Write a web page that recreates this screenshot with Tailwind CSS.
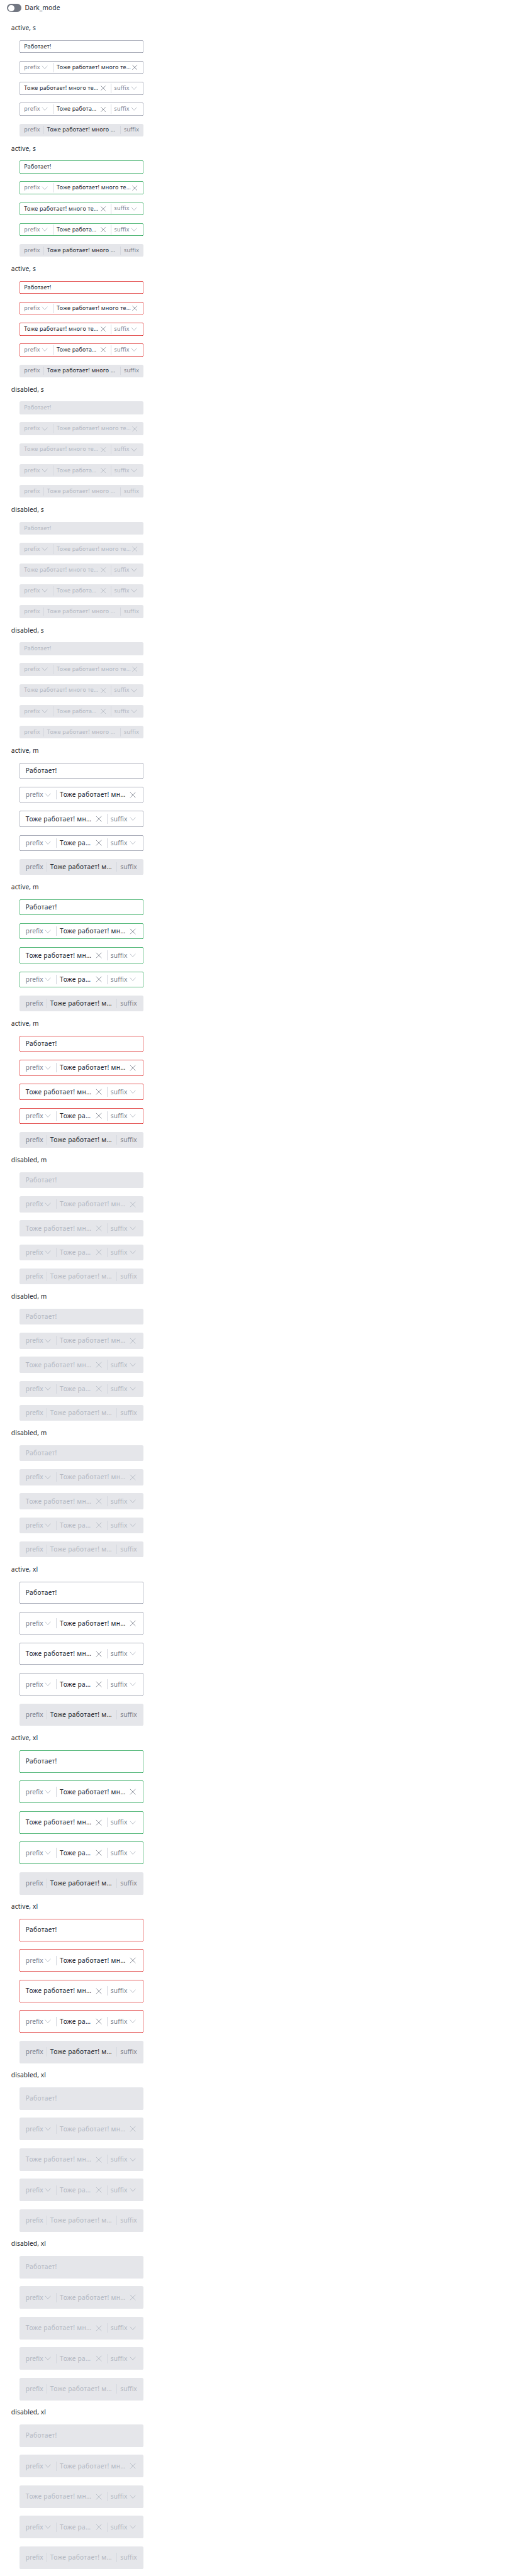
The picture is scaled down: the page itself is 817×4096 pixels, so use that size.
<!DOCTYPE html>
<html lang="ru" class="text-[10.2125px]">
<head>
<meta charset="utf-8">
<title>Input prefix and suffix</title>
<script src="https://cdn.jsdelivr.net/npm/@tailwindcss/browser@4"></script>
</head>
<body class="bg-white font-['Noto_Sans',sans-serif] text-[1rem] leading-5 tracking-[0.01em] text-[#22262f]">
<header class="flex h-15 items-start pt-2.5 pl-4.5">
  <div class="flex items-center gap-2">
    <span class="flex h-5 w-9 items-center rounded-full bg-[#727782] p-0.5"><span class="size-4 rounded-full bg-white"></span></span>
    <span>Dark_mode</span>
  </div>
</header>
<main id="list" class="flex flex-col"></main>
<script>
const sizes = {
  s: {
    field: 'h-8 pl-3 text-[0.875rem]', pre: 'w-18.25 h-6', suf: 'w-20.75 h-6 pr-4', preRO: 'w-12.25 h-5', sufRO: 'w-14.75 h-5',
    xEnd: 'mr-3.5', xMid: 'mr-2.5', x: 'M2.2 2.2 13.8 13.8M13.8 2.2 2.2 13.8', side: 'tracking-[0.022em]', main: 'tracking-[0.026em]',
    t: ['Тоже работает! много те…', 'Тоже работает! много те…', 'Тоже работа…', 'Тоже работает! много …']
  },
  m: {
    field: 'h-10 pl-4', pre: 'w-19.25 h-6', suf: 'w-23 h-6 pr-5', preRO: 'w-13.25 h-6', sufRO: 'w-17 h-6',
    xEnd: 'mr-5', xMid: 'mr-3', x: 'M1.3 1.3 14.7 14.7M14.7 1.3 1.3 14.7', side: 'tracking-[0.006em]', main: 'tracking-[0.03em]',
    t: ['Тоже работает! мн…', 'Тоже работает! мн…', 'Тоже ра…', 'Тоже работает! м…']
  }
};
sizes.xl = { ...sizes.m, field: 'h-14 pl-4' };

const line = ' border-[#d5d8df] ';
const icon = (d, cls) => `<svg viewBox="0 0 16 16" class="size-4 shrink-0 overflow-visible ${cls}" fill="none" stroke="currentColor" stroke-width="1.4"><path d="${d}"/></svg>`;
const chevron = cls => icon('M1.3 4.2 8 11.6 14.7 4.2', cls);

function section(state, size, ring) {
  const z = sizes[size], off = state === 'disabled';
  const muted = (off ? 'text-[#b3b8c2] ' : 'text-[#7c818d] ') + z.side;
  const chev = 'text-[#b3b8c2]';
  const skin = off ? 'bg-[#e5e6ea] text-[#b3b8c2]' : 'bg-white inset-ring-[0.0625rem] ' + ring;
  const base = 'flex w-77.5 items-center rounded-[0.25rem] whitespace-nowrap ';
  const text = t => `<span class="min-w-0 flex-1 ${z.main}">${t}</span>`;
  const pre = `<span class="mr-2 flex shrink-0 items-center justify-between border-r pr-3 ${line} ${muted} ${z.pre}">prefix${chevron(chev)}</span>`;
  const suf = `<span class="flex shrink-0 items-center justify-between border-l pl-2 ${line} ${muted} ${z.suf}">suffix${chevron(chev)}</span>`;
  const row = (inner, s = skin) => `<div class="${base} ${z.field} ${s}">${inner}</div>`;
  const ro = off ? skin : 'bg-[#e5e6ea]';
  return `<section class="pb-5">
    <h2 class="h-5 pl-7">${state}, ${size}</h2>
    <div class="mt-5 ml-12 flex flex-col gap-5">
      ${row(text('Работает!'))}
      ${row(pre + text(z.t[0]) + icon(z.x, muted + ' ' + z.xEnd))}
      ${row(text(z.t[1]) + icon(z.x, muted + ' ' + z.xMid) + suf)}
      ${row(pre + text(z.t[2]) + icon(z.x, muted + ' ' + z.xMid) + suf)}
      ${row(`<span class="mr-2 flex shrink-0 items-center border-r ${line} ${muted} ${z.preRO}">prefix</span>` + text(z.t[3]) +
        `<span class="flex shrink-0 items-center border-l pl-2 ${line} ${muted} ${z.sufRO}">suffix</span>`, ro)}
    </div>
  </section>`;
}

const rings = ['inset-ring-[#9297a7]', 'inset-ring-[#1aa04c]', 'inset-ring-[#dc2020]'];
document.getElementById('list').innerHTML = ['s', 'm', 'xl'].map(size =>
  `<div class="flex flex-col">${['active', 'disabled'].map(st => rings.map(r => section(st, size, r)).join('')).join('')}</div>`).join('');
</script>
</body>
</html>
